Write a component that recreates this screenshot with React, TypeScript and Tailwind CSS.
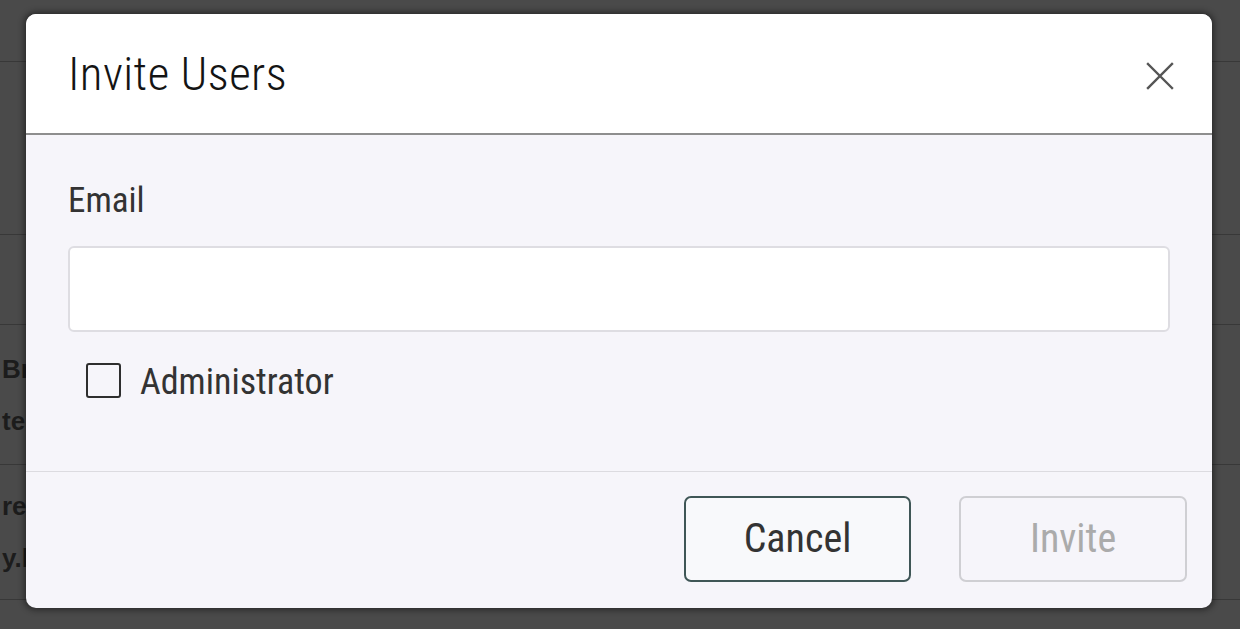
const rows = [
  { h: "h-[62px]", text: "" },
  { h: "h-[173px]", text: "" },
  { h: "h-[90px]", text: "" },
  { h: "h-[140px]", text: "Br|te" },
  { h: "h-[135px]", text: "re|y.ly" },
];

function BackgroundPage() {
  return (
    <div className="flex flex-col w-full h-full">
      {rows.map((row, i) => (
        <div key={i} className={`${row.h} border-b border-[#383838] flex flex-col justify-center gap-[14px] pl-[2px]`}>
          {row.text.split("|").filter(Boolean).map((t) => (
            <span key={t} className="text-[26px] font-bold leading-[38px] text-[#1c1c1c] font-['Liberation_Sans',sans-serif]">
              {t}
            </span>
          ))}
        </div>
      ))}
    </div>
  );
}

function CloseIcon() {
  return (
    <svg width="30" height="30" viewBox="0 0 30 30" fill="none" stroke="#555" strokeWidth="2.4" strokeLinecap="square">
      <path d="M3 3 L27 27 M27 3 L3 27" />
    </svg>
  );
}

export default function App() {
  return (
    <div className="relative w-[1240px] h-[629px] overflow-hidden bg-[#4a4a4a] font-['Roboto_Condensed',Roboto,sans-serif]">
      <BackgroundPage />

      {/* overlay + dialog */}
      <div className="absolute inset-0 pl-[26px] pt-[14px]">
        <div className="w-[1186px] h-[594px] flex flex-col rounded-[10px] overflow-hidden bg-[#f6f5fa] shadow-[0_0_6px_2px_rgba(0,0,0,0.45)]">
          <div className="h-[121px] shrink-0 bg-white border-b-2 border-[#8e8e8e] flex items-center justify-between pl-[42px] pr-[37px]">
            <h2 className="text-[47px] font-light leading-none text-[#141414] tracking-[0.4px]">Invite Users</h2>
            <button className="w-[30px] h-[30px] mt-[5px] flex items-center justify-center" aria-label="Close">
              <CloseIcon />
            </button>
          </div>

          <div className="flex-1 px-[42px] pt-[48px]">
            <label className="block text-[35px] leading-[35px] text-[#333]">Email</label>
            <input
              type="text"
              className="mt-[28px] w-full h-[86px] rounded-[6px] border-2 border-[#dedde2] bg-white px-4 text-[30px] outline-none"
            />
            <label className="mt-[28px] ml-[18px] flex items-center gap-[19px] w-fit">
              <span className="w-[35px] h-[35px] rounded-[3px] border-[2.5px] border-[#2e2e2e] bg-transparent" />
              <span className="text-[36px] leading-[36px] text-[#333] pt-[4px]">Administrator</span>
            </label>
          </div>

          <div className="h-[137px] shrink-0 border-t border-[#dcdbe0] flex items-center justify-end gap-[48px] pr-[25px] pb-[2px]">
            <button className="w-[227px] h-[86px] rounded-[7px] border-2 border-[#3f5656] bg-[#f8f9fb] text-[40px] text-[#333]">
              Cancel
            </button>
            <button className="w-[228px] h-[86px] rounded-[7px] border-2 border-[#cfcfd3] bg-transparent text-[40px] text-[#ababab]">
              Invite
            </button>
          </div>
        </div>
      </div>
    </div>
  );
}
